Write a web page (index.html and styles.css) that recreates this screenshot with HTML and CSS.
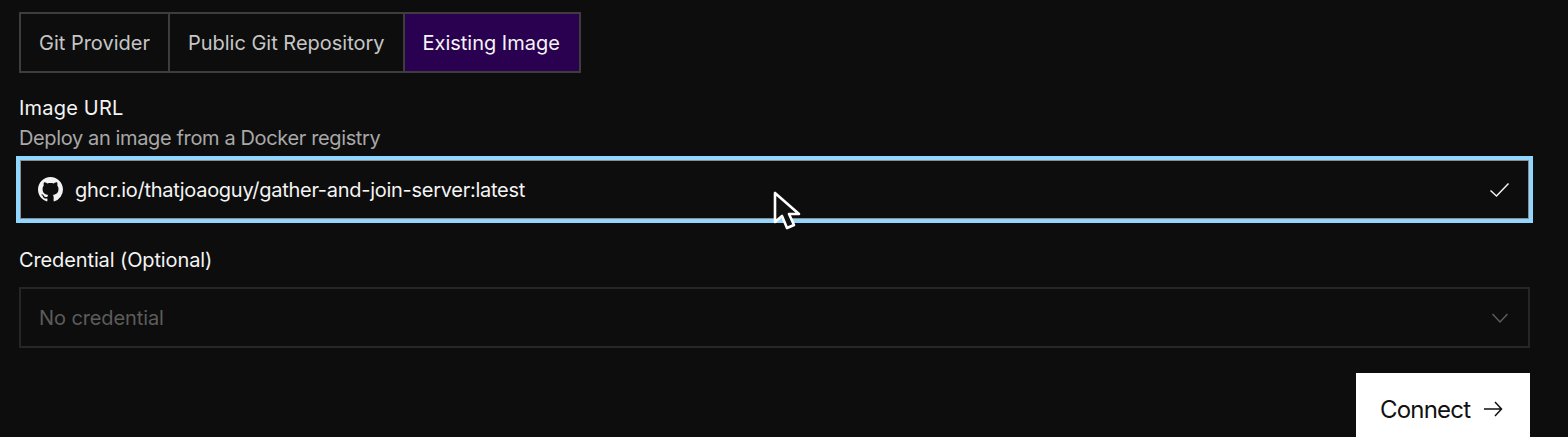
FILE: index.html
```html
<!DOCTYPE html>
<html lang="en">

<head>
    <meta charset="UTF-8">
    <meta name="viewport" content="width=device-width, initial-scale=1.0">
    <title>Connect source</title>
    <link rel="stylesheet" href="styles.css">
</head>

<body>
    <div class="form">
        <ul class="tabs">
            <li><button type="button">Git Provider</button></li>
            <li><button type="button">Public Git Repository</button></li>
            <li class="on"><button type="button">Existing Image</button></li>
        </ul>

        <div class="field image-field">
            <label class="label">Image URL</label>
            <p class="help">Deploy an image from a Docker registry</p>
            <div class="input focus">
                <svg class="logo" viewBox="0 0 16 16" width="25" height="25" fill="#f2f2f2">
                    <path d="M8 0C3.58 0 0 3.58 0 8c0 3.54 2.29 6.53 5.47 7.59.4.07.55-.17.55-.38 0-.19-.01-.82-.01-1.49-2.01.37-2.53-.49-2.69-.94-.09-.23-.48-.94-.82-1.13-.28-.15-.68-.52-.01-.53.63-.01 1.08.58 1.23.82.72 1.21 1.87.87 2.33.66.07-.52.28-.87.51-1.07-1.78-.2-3.64-.89-3.64-3.95 0-.87.31-1.59.82-2.15-.08-.2-.36-1.02.08-2.12 0 0 .67-.21 2.2.82.64-.18 1.32-.27 2-.27s1.36.09 2 .27c1.53-1.04 2.2-.82 2.2-.82.44 1.1.16 1.92.08 2.12.51.56.82 1.27.82 2.15 0 3.07-1.87 3.75-3.65 3.95.29.25.54.73.54 1.48 0 1.07-.01 1.93-.01 2.2 0 .21.15.46.55.38A8.01 8.01 0 0 0 16 8c0-4.42-3.58-8-8-8z" />
                </svg>
                <span class="value">ghcr.io/thatjoaoguy/gather-and-join-server:latest</span>
                <svg class="side" viewBox="0 0 20 20" width="20" height="20" fill="none" stroke="#f2f2f2" stroke-width="1.5">
                    <path d="M0.5 10.5 6.5 16 18.5 3.5" />
                </svg>
            </div>
        </div>

        <div class="field credential-field">
            <label class="label">Credential (Optional)</label>
            <div class="input disabled">
                <span class="value">No credential</span>
                <svg class="side" viewBox="0 0 20 20" width="20" height="20" fill="none" stroke="#5c5c5c" stroke-width="1.5">
                    <path d="M2.5 6 10 14 17.5 6" />
                </svg>
            </div>
        </div>

        <div class="actions">
            <button class="connect" type="button">
                Connect
                <svg viewBox="0 0 20 20" width="20" height="20" fill="none" stroke="#111" stroke-width="1.5">
                    <path d="M1 10H18.5M12 3 18.5 10 12 17" />
                </svg>
            </button>
        </div>
    </div>

    <!-- mouse pointer over the input -->
    <svg class="cursor" viewBox="0 0 28 40" width="28" height="40">
        <path d="M2 2V31L9 25L14 37L21 34L16 23H26Z" fill="#111" stroke="#fff" stroke-width="2.6" stroke-linejoin="round" />
    </svg>
</body>

</html>
```

FILE: styles.css
```css
* {
    margin: 0;
    padding: 0;
    box-sizing: border-box;
    list-style: none;
}

html,
body {
    height: 437px;
    overflow: hidden;
}

body {
    position: relative;
    background-color: #0d0d0d;
    font-family: "Inter", "Liberation Sans", sans-serif;
    font-size: 20px;
}

.form {
    width: 1511px;
    margin-left: 19px;
    padding-top: 12px;
}

.tabs {
    display: flex;
    width: max-content;
    height: 61px;
    border: 2px solid #3d3d3d;
}

.tabs li {
    border-right: 2px solid #3d3d3d;
}

.tabs li:last-child {
    border-right: 0;
}

.tabs button {
    height: 100%;
    padding: 0 18px;
    background-color: transparent;
    border: 0;
    font: inherit;
    letter-spacing: -0.01px;
    color: #c6c6c6;
}

.tabs li.on button {
    padding-right: 19px;
    background-color: #2a0150;
    color: #f4f4f4;
}

.field {
    display: flex;
    flex-direction: column;
}

.image-field {
    padding-top: 21px;
}

.credential-field {
    padding-top: 26px;
}

.label {
    height: 28px;
    line-height: 28px;
    letter-spacing: 0.2px;
    color: #f4f4f4;
}

.help {
    height: 32px;
    margin-bottom: 5px;
    line-height: 32px;
    letter-spacing: -0.37px;
    color: #a8a8a8;
}

.credential-field .label {
    margin-bottom: 13px;
    letter-spacing: -0.12px;
}

.input {
    display: flex;
    align-items: center;
    height: 61px;
    padding: 0 18px;
    border: 2px solid #262626;
}

.input .value {
    flex: 1;
    letter-spacing: -0.27px;
}

.focus {
    border-color: #8d8d8d;
    outline: 4px solid #90d6ff;
    outline-offset: -1px;
    color: #f4f4f4;
}

.logo {
    margin: 0 12px 0 -1px;
}

.disabled {
    color: #5c5c5c;
}

.disabled .value {
    letter-spacing: -0.1px;
}

.actions {
    display: flex;
    justify-content: flex-end;
    padding-top: 25px;
}

.connect {
    display: flex;
    align-items: center;
    gap: 13px;
    width: 174px;
    height: 72px;
    padding: 0 24px;
    background-color: #fff;
    border: 0;
    font: inherit;
    font-size: 24px;
    letter-spacing: -0.8px;
    color: #111;
}

.cursor {
    position: absolute;
    top: 191px;
    left: 773px;
}
```
